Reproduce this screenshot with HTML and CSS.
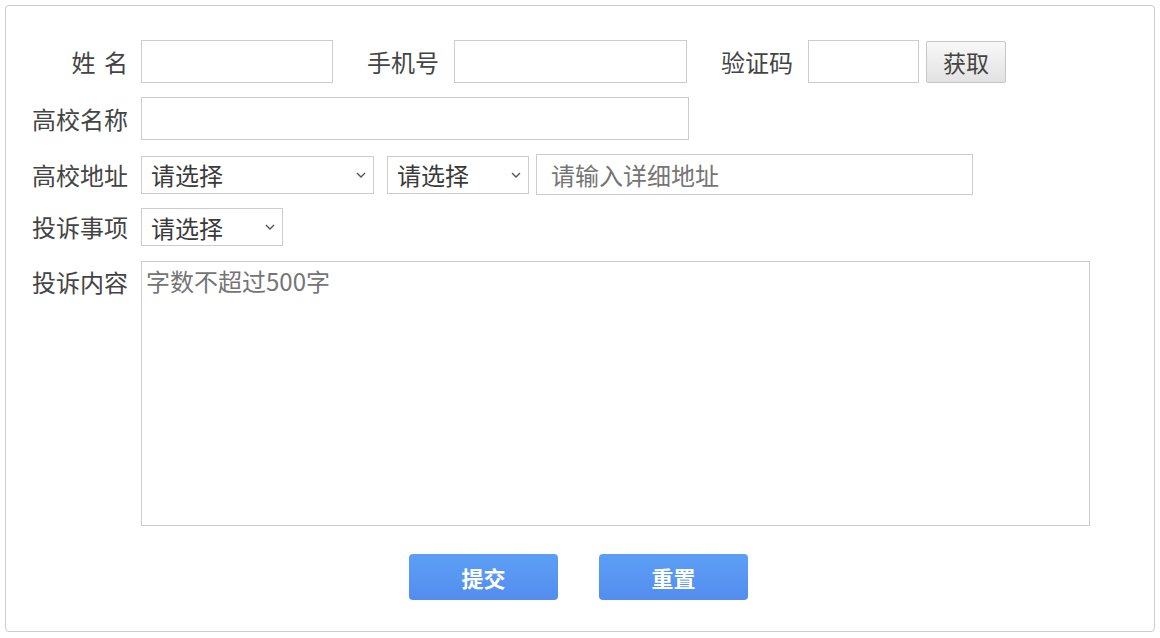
FILE: index.html
```html
<!DOCTYPE html>
<html lang="zh-CN">
<head>
    <meta charset="UTF-8">
    <meta name="viewport" content="width=device-width, initial-scale=1.0">
    <title>投诉登记</title>
    <link rel="stylesheet" href="styles.css">
</head>
<body>

    <div class="complaint-box">
        <form class="complaint-form" onsubmit="return false;">
            <!-- 联系人 -->
            <div class="form-row">
                <label class="form-label label-name">姓 名</label>
                <input type="text" class="field field-name">
                <label class="inline-label label-phone">手机号</label>
                <input type="text" class="field field-phone">
                <label class="inline-label label-code">验证码</label>
                <input type="text" class="field field-code">
                <button type="button" class="btn-code">获取</button>
            </div>

            <div class="form-row">
                <label class="form-label">高校名称</label>
                <input type="text" class="field field-school">
            </div>

            <!-- 地址 -->
            <div class="form-row row-address">
                <label class="form-label">高校地址</label>
                <select class="select select-province">
                    <option>请选择</option>
                </select>
                <select class="select select-city">
                    <option>请选择</option>
                </select>
                <input type="text" class="field field-address" placeholder="请输入详细地址">
            </div>

            <div class="form-row row-type">
                <label class="form-label">投诉事项</label>
                <select class="select select-type">
                    <option>请选择</option>
                </select>
            </div>

            <div class="form-row row-content">
                <label class="form-label">投诉内容</label>
                <textarea class="field field-content" placeholder="字数不超过500字"></textarea>
            </div>

            <div class="form-actions">
                <button type="submit" class="btn-primary">提交</button>
                <button type="reset" class="btn-primary">重置</button>
            </div>
        </form>
    </div>

</body>
</html>
```

FILE: styles.css
```css
/* Reset */
* {
    margin: 0;
    padding: 0;
    box-sizing: border-box;
    font-family: "Noto Sans CJK SC", "Noto Sans", sans-serif;
}

body {
    background: #fff;
    color: #444;
}

/* Khung ngoài */
.complaint-box {
    margin: 5px;
    width: 1150px;
    height: 627px;
    border: 1px solid #ccc;
    border-radius: 4px;
    padding: 34px 0 0 22px;
}

.form-row {
    display: flex;
    align-items: center;
    margin-bottom: 14px;
}

.form-label {
    width: 100px;
    margin-right: 13px;
    text-align: right;
    font-size: 24px;
    line-height: 30px;
    color: #444;
}

.label-name {
    word-spacing: 3px;
}

.inline-label {
    font-size: 24px;
    line-height: 30px;
    color: #444;
    margin-right: 15px;
}

.label-phone {
    margin-left: 34px;
}

.label-code {
    margin-left: 34px;
}

/* Ô nhập */
.field {
    height: 43px;
    border: 1px solid #ccc;
    background: #fff;
    font-size: 24px;
    color: #444;
    padding: 0 14px;
    outline: none;
}

.field::placeholder {
    color: #757575;
}

.field-name {
    width: 192px;
}

.field-phone {
    width: 233px;
}

.field-code {
    width: 111px;
}

.field-school {
    width: 548px;
}

.btn-code {
    width: 80px;
    height: 42px;
    margin-left: 7px;
    border: 1px solid #c6c6c6;
    border-radius: 2px;
    background: linear-gradient(#f8f8f8, #e2e2e2);
    font-size: 23px;
    color: #444;
}

/* Chọn tỉnh / thành */
.row-address {
    margin-bottom: 13px;
}

.select {
    -webkit-appearance: none;
    appearance: none;
    height: 38px;
    border: 1px solid #ccc;
    border-radius: 0;
    background: #fff url("data:image/svg+xml,%3Csvg xmlns='http://www.w3.org/2000/svg' width='10' height='6' viewBox='0 0 10 6'%3E%3Cpath d='M1 1l4 4 4-4' fill='none' stroke='%23555' stroke-width='1.4'/%3E%3C/svg%3E") no-repeat right 7px center;
    font-size: 24px;
    color: #3a3a3a;
    padding: 0 24px 0 9px;
    outline: none;
}

.select-province {
    width: 233px;
}

.select-city {
    width: 142px;
    margin-left: 13px;
}

.select-type {
    width: 142px;
}

.field-address {
    width: 437px;
    height: 41px;
    margin-left: 7px;
}

.row-type {
    margin-bottom: 15px;
}

.row-content {
    align-items: flex-start;
    margin-bottom: 28px;
}

.row-content .form-label {
    padding-top: 6px;
}

.field-content {
    width: 949px;
    height: 265px;
    padding: 4px 4px;
    resize: none;
    line-height: 30px;
}

/* Nút */
.form-actions {
    display: flex;
    gap: 41px;
    padding-left: 381px;
}

.btn-primary {
    width: 149px;
    height: 46px;
    border: none;
    border-radius: 4px;
    background: linear-gradient(#5c9ff6, #548ded);
    color: #fff;
    font-size: 22px;
    font-weight: bold;
    cursor: pointer;
}
```
